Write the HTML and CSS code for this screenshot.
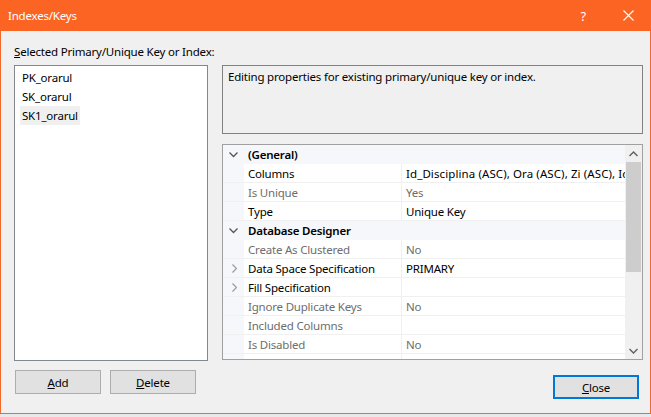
FILE: index.html
```html
<!DOCTYPE html>
<html>
<head>
<meta charset="utf-8">
<link rel="stylesheet" href="styles.css">
</head>
<body>
<div class="window">
  <div class="titlebar">
    <span class="title">Indexes/Keys</span>
    <span class="help">?</span>
    <span class="close-x"><svg width="11" height="11" viewBox="0 0 11 11"><path d="M0.5 0.5 L10.5 10.5 M10.5 0.5 L0.5 10.5" stroke="#fff" stroke-width="1.1" fill="none"/></svg></span>
  </div>
  <div class="body">
    <div class="label"><u>S</u>elected Primary/Unique Key or Index:</div>
    <div class="main">
      <div class="list">
        <div class="item"><span>PK_orarul</span></div>
        <div class="item"><span>SK_orarul</span></div>
        <div class="item"><span class="sel">SK1_orarul</span></div>
      </div>
      <div class="right">
        <div class="desc">Editing properties for existing primary/unique key or index.</div>
        <div class="grid">
          <div class="rows">
            <div class="row cat"><span class="gut"><svg width="9" height="6" viewBox="0 0 9 6"><path d="M0.5 0.5 L4.5 4.5 L8.5 0.5" stroke="#555" stroke-width="1.3" fill="none"/></svg></span><span class="catname">(General)</span></div>
            <div class="row"><span class="gut"></span><span class="name">Columns</span><span class="val wide">Id_Disciplina (ASC), Ora (ASC), Zi (ASC), Id_Grupa (ASC)</span></div>
            <div class="row dis"><span class="gut"></span><span class="name">Is Unique</span><span class="val">Yes</span></div>
            <div class="row"><span class="gut"></span><span class="name">Type</span><span class="val">Unique Key</span></div>
            <div class="row cat"><span class="gut"><svg width="9" height="6" viewBox="0 0 9 6"><path d="M0.5 0.5 L4.5 4.5 L8.5 0.5" stroke="#555" stroke-width="1.3" fill="none"/></svg></span><span class="catname">Database Designer</span></div>
            <div class="row dis"><span class="gut"></span><span class="name">Create As Clustered</span><span class="val">No</span></div>
            <div class="row"><span class="gut"><svg width="5" height="9" viewBox="0 0 5 9"><path d="M0.5 0.5 L4.5 4.5 L0.5 8.5" stroke="#999" stroke-width="1.2" fill="none"/></svg></span><span class="name">Data Space Specification</span><span class="val">PRIMARY</span></div>
            <div class="row"><span class="gut"><svg width="5" height="9" viewBox="0 0 5 9"><path d="M0.5 0.5 L4.5 4.5 L0.5 8.5" stroke="#999" stroke-width="1.2" fill="none"/></svg></span><span class="name">Fill Specification</span><span class="val"></span></div>
            <div class="row dis"><span class="gut"></span><span class="name">Ignore Duplicate Keys</span><span class="val">No</span></div>
            <div class="row dis"><span class="gut"></span><span class="name">Included Columns</span><span class="val"></span></div>
            <div class="row dis"><span class="gut"></span><span class="name">Is Disabled</span><span class="val">No</span></div>
            <div class="row dis"><span class="gut"></span><span class="name"></span><span class="val"></span></div>
          </div>
          <div class="scroll">
            <div class="arrow"><svg width="9" height="6" viewBox="0 0 9 6"><path d="M0.5 5 L4.5 1 L8.5 5" stroke="#606060" stroke-width="1.4" fill="none"/></svg></div>
            <div class="track"><div class="thumb"></div></div>
            <div class="arrow"><svg width="9" height="6" viewBox="0 0 9 6"><path d="M0.5 1 L4.5 5 L8.5 1" stroke="#606060" stroke-width="1.4" fill="none"/></svg></div>
          </div>
        </div>
      </div>
    </div>
    <div class="buttons">
      <button class="btn"><u>A</u>dd</button>
      <button class="btn"><u>D</u>elete</button>
      <span class="spacer"></span>
      <button class="btn default"><u>C</u>lose</button>
    </div>
  </div>
</div>
</body>
</html>
```
FILE: styles.css
```css
html, body {
  margin: 0;
  padding: 0;
  background: #e9e9e9;
}
body {
  font-family: "Noto Sans", "DejaVu Sans", sans-serif;
  font-size: 11.5px;
  letter-spacing: -0.2px;
  color: #000;
}
.window {
  width: 651px;
  height: 414px;
  display: flex;
  flex-direction: column;
}
.titlebar {
  height: 31px;
  background: #fc6423;
  color: #fff;
  display: flex;
  align-items: center;
  flex-shrink: 0;
}
.title {
  margin-left: 8px;
  flex: 1;
  padding-bottom: 1px;
}
.help {
  font-size: 13px;
  margin-right: 37px;
}
.close-x {
  display: flex;
  margin-right: 17px;
}
.body {
  flex: 1;
  background: #f0f0f0;
  border: 1px solid #f26b2c;
  border-top: none;
  padding: 13px 7px 0 13px;
  display: flex;
  flex-direction: column;
}
.label {
  line-height: 15px;
  height: 15px;
  margin-bottom: 6px;
}
.main {
  display: flex;
  height: 296px;
}
.list {
  width: 194px;
  box-sizing: border-box;
  border: 1px solid #828790;
  background: #fff;
  padding: 2px 5px;
}
.item {
  height: 19px;
  line-height: 19px;
}
.item span {
  display: inline-block;
  padding: 0 2px;
}
.item .sel {
  background: #f0f0f0;
}
.right {
  margin-left: 14px;
  width: 421px;
  display: flex;
  flex-direction: column;
}
.desc {
  height: 69px;
  box-sizing: border-box;
  border: 1px solid #828282;
  padding: 3px 5px;
  line-height: 16px;
  margin-bottom: 10px;
}
.grid {
  height: 216px;
  box-sizing: border-box;
  border: 1px solid #a0a0a0;
  background: #f5f7fa;
  display: flex;
  overflow: hidden;
}
.rows {
  flex: 1;
  min-width: 0;
}
.row {
  height: 19px;
  box-sizing: border-box;
  display: flex;
  align-items: stretch;
  border-bottom: 1px solid #f0f0f0;
  white-space: nowrap;
}
.name, .val, .catname {
  padding-top: 1px;
  line-height: 17px;
}
.gut {
  width: 21px;
  flex-shrink: 0;
  display: flex;
  align-items: center;
  justify-content: center;
  background: #f5f7fa;
}
.row .gut svg {
  margin-left: 1px;
  margin-top: 1px;
}
.name {
  width: 158px;
  flex-shrink: 0;
  box-sizing: border-box;
  padding-left: 4px;
  background: #fff;
  border-right: 1px solid #f0f0f0;
}
.val {
  flex: 1;
  padding-left: 4px;
  background: #fff;
  overflow: hidden;
}
.val.wide {
  letter-spacing: 0.1px;
}
.cat {
  background: #f5f7fa;
  border-bottom-color: #f5f7fa;
}
.cat .gut svg {
  margin-left: 0;
}
.catname {
  padding-left: 4px;
  font-weight: 600;
}
.dis .name, .dis .val {
  color: #6d6d6d;
}
.scroll {
  width: 17px;
  flex-shrink: 0;
  background: #f0f0f0;
  display: flex;
  flex-direction: column;
}
.arrow {
  height: 17px;
  display: flex;
  align-items: center;
  justify-content: center;
}
.track {
  flex: 1;
}
.thumb {
  margin: 0 1px;
  height: 110px;
  background: #cdcdcd;
}
.buttons {
  display: flex;
  align-items: flex-start;
  margin-top: 9px;
  padding-left: 1px;
}
.btn {
  width: 86px;
  height: 24px;
  box-sizing: border-box;
  background: #e1e1e1;
  border: 1px solid #adadad;
  font-family: inherit;
  font-size: 11.5px;
  letter-spacing: -0.2px;
  color: #000;
  padding: 0;
  margin: 0 9px 0 0;
}
.spacer {
  flex: 1;
}
.btn.default {
  margin: 5px 4px 0 0;
  border: 2px solid #0078d7;
  height: 24px;
}
```
